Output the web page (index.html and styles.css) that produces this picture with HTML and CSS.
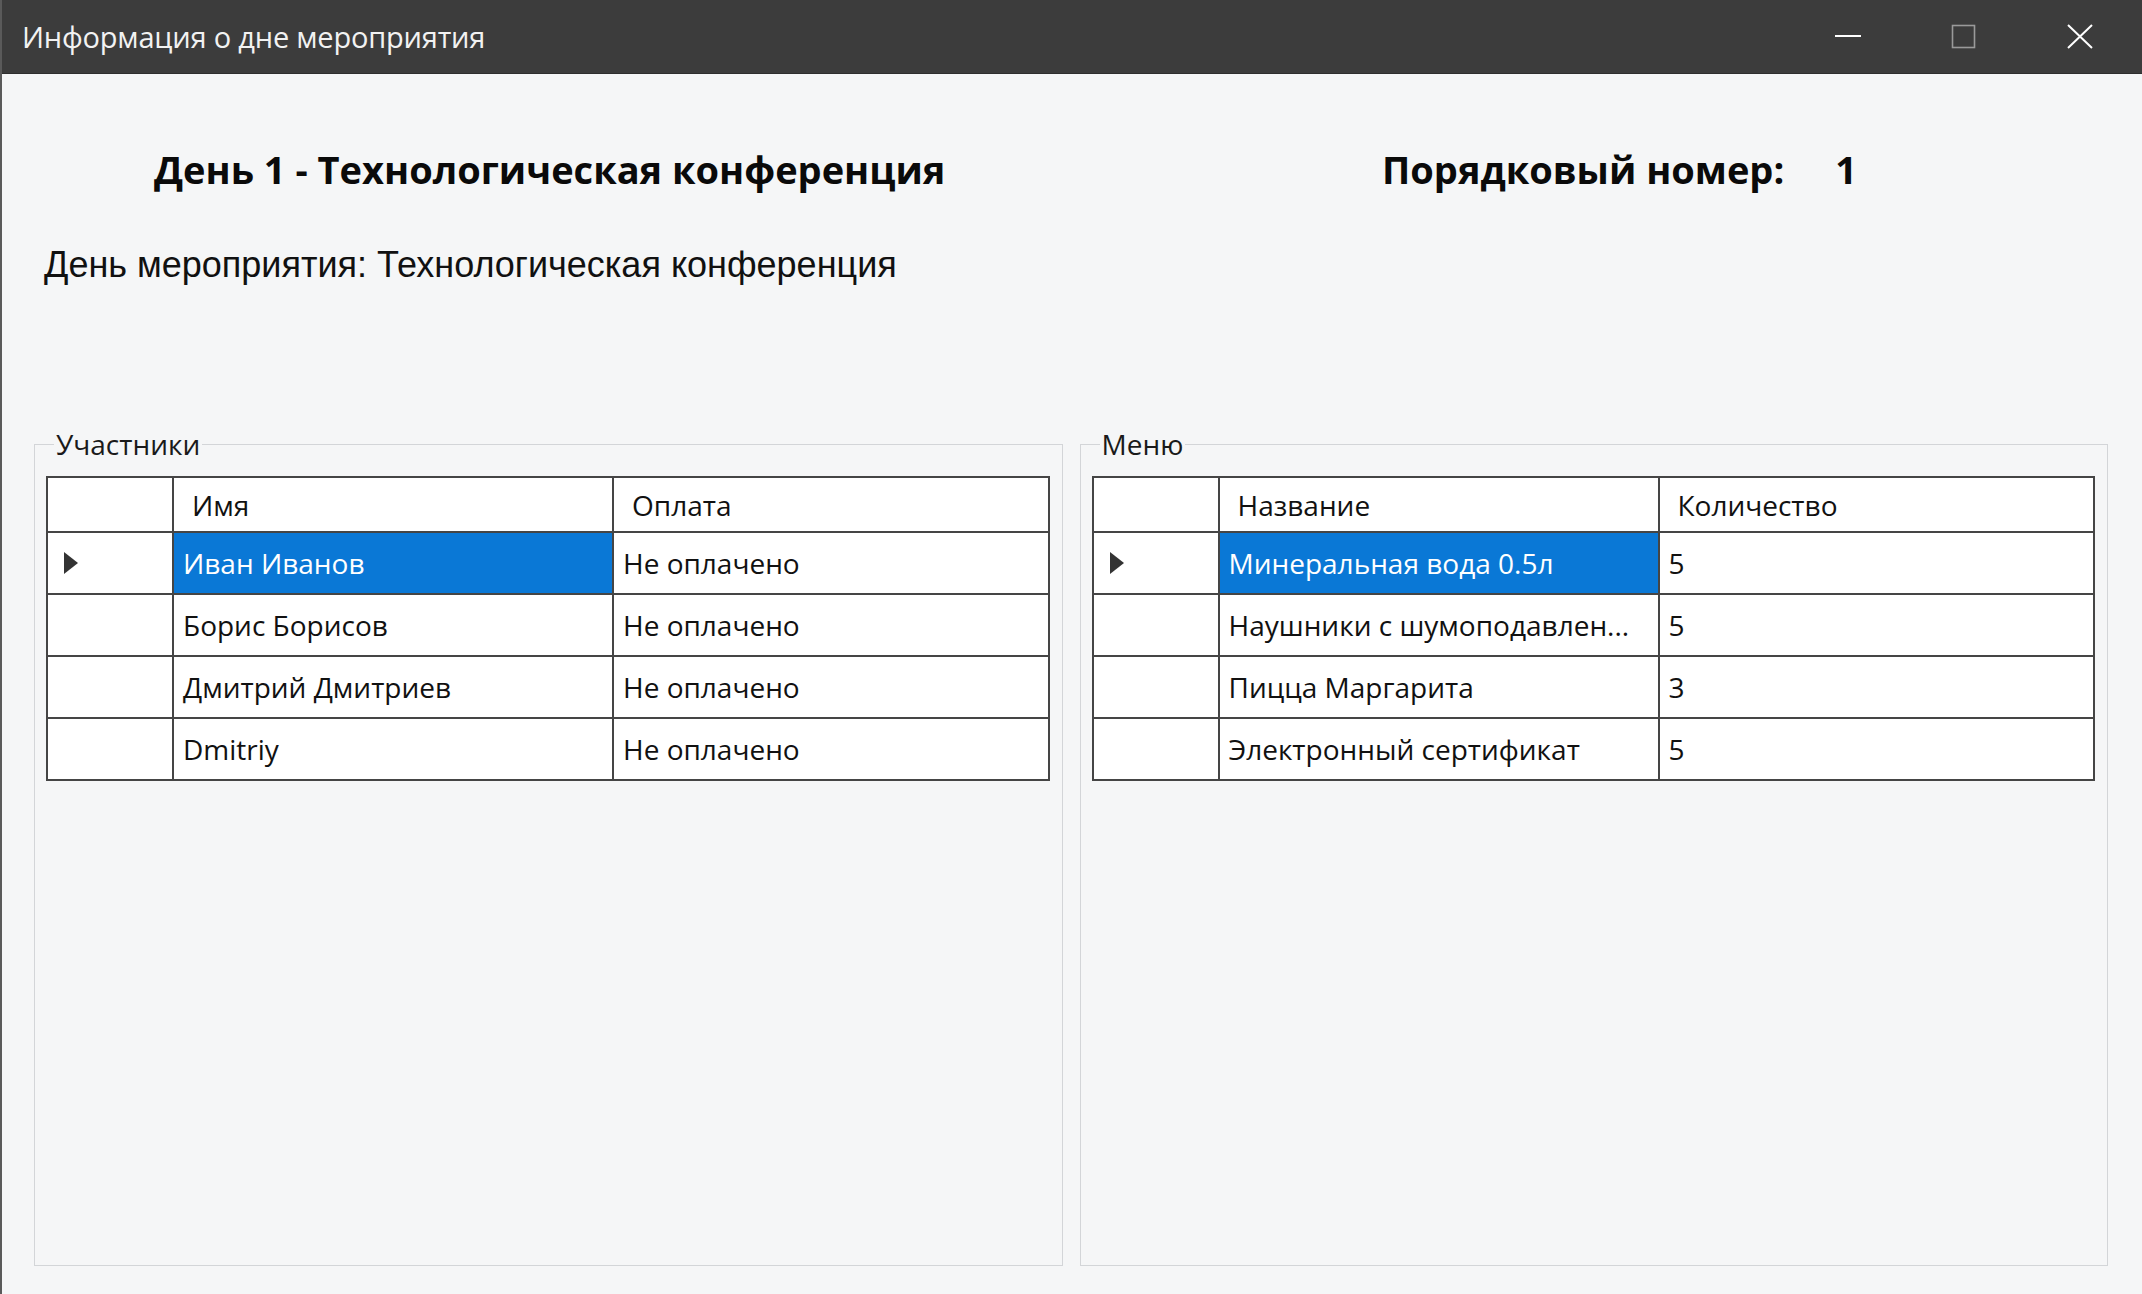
FILE: index.html
```html
<!DOCTYPE html>
<html lang="ru">
<head>
<meta charset="utf-8">
<title>Информация о дне мероприятия</title>
<link rel="stylesheet" href="styles.css">
</head>
<body>
<div class="window">
  <header class="titlebar">
    <span class="title">Информация о дне мероприятия</span>
    <div class="controls">
      <button class="ctl" aria-label="Свернуть">
        <svg width="26" height="26" viewBox="0 0 26 26"><line x1="0" y1="12" x2="26" y2="12" stroke="#ffffff" stroke-width="2"/></svg>
      </button>
      <button class="ctl" aria-label="Развернуть">
        <svg width="26" height="26" viewBox="0 0 26 26"><rect x="1.5" y="1.5" width="22" height="22" fill="none" stroke="#9a9a9a" stroke-width="1.6"/></svg>
      </button>
      <button class="ctl" aria-label="Закрыть">
        <svg width="26" height="26" viewBox="0 0 26 26"><path d="M1 1 L25 24 M25 1 L1 24" stroke="#ffffff" stroke-width="2" fill="none"/></svg>
      </button>
    </div>
  </header>

  <main class="content">
    <div class="head-row">
      <h1 class="day-title">День 1 - Технологическая конференция</h1>
      <span class="num-label">Порядковый номер:</span>
      <span class="num-value">1</span>
    </div>
    <p class="day-label">День мероприятия: Технологическая конференция</p>

    <div class="groups">
      <fieldset class="group">
        <legend>Участники</legend>
        <table class="grid">
          <colgroup><col class="c-rh"><col class="c-1"><col></colgroup>
          <thead>
            <tr><th class="rh"></th><th>Имя</th><th>Оплата</th></tr>
          </thead>
          <tbody>
            <tr><td class="rh"><span class="cur"></span></td><td class="sel">Иван Иванов</td><td>Не оплачено</td></tr>
            <tr><td class="rh"></td><td>Борис Борисов</td><td>Не оплачено</td></tr>
            <tr><td class="rh"></td><td>Дмитрий Дмитриев</td><td>Не оплачено</td></tr>
            <tr><td class="rh"></td><td>Dmitriy</td><td>Не оплачено</td></tr>
          </tbody>
        </table>
      </fieldset>

      <fieldset class="group">
        <legend>Меню</legend>
        <table class="grid">
          <colgroup><col class="c-rh"><col class="c-1"><col></colgroup>
          <thead>
            <tr><th class="rh"></th><th>Название</th><th>Количество</th></tr>
          </thead>
          <tbody>
            <tr><td class="rh"><span class="cur"></span></td><td class="sel">Минеральная вода 0.5л</td><td>5</td></tr>
            <tr><td class="rh"></td><td>Наушники с шумоподавлен...</td><td>5</td></tr>
            <tr><td class="rh"></td><td>Пицца Маргарита</td><td>3</td></tr>
            <tr><td class="rh"></td><td>Электронный сертификат</td><td>5</td></tr>
          </tbody>
        </table>
      </fieldset>
    </div>
  </main>
</div>
</body>
</html>
```

FILE: styles.css
```css
* { box-sizing: border-box; }

html, body {
  margin: 0;
  padding: 0;
  background: #f5f6f7;
}

.window {
  width: 2142px;
  height: 1294px;
  display: flex;
  flex-direction: column;
  background: #f5f6f7;
  border-left: 2px solid #5a5a5a;
  overflow: hidden;
}

.titlebar {
  height: 74px;
  flex: none;
  display: flex;
  align-items: center;
  background: #3c3c3c;
  border-bottom: 1px solid #2e2e2e;
  margin-left: -2px;
}

.title {
  padding-left: 22px;
  color: #f2f2f2;
  font-family: "Open Sans", "Noto Sans", sans-serif;
  font-size: 29px;
  letter-spacing: -0.2px;
}

.controls {
  margin-left: auto;
  margin-right: 4px;
  display: flex;
  height: 100%;
}

.ctl {
  width: 116px;
  height: 100%;
  border: 0;
  padding: 0;
  background: transparent;
  display: flex;
  align-items: center;
  justify-content: center;
}

.ctl svg { display: block; }

.content {
  flex: 1;
  padding: 0 34px 0 32px;
  display: flex;
  flex-direction: column;
}

.head-row {
  margin-top: 75px;
  display: grid;
  grid-template-columns: 1348px auto auto;
  justify-content: start;
  align-items: center;
  height: 40px;
}

.day-title,
.num-label,
.num-value {
  margin: 0;
  font-family: "Open Sans", "Noto Sans", sans-serif;
  font-weight: 700;
  font-size: 38px;
  line-height: 40px;
  color: #0a0a0a;
}

.day-title { padding-left: 120px; }

.num-value { margin-left: 51px; }

.day-label {
  margin: 56px 0 0 10px;
  font-family: "Liberation Sans", Arial, sans-serif;
  font-size: 36px;
  line-height: 40px;
  color: #111;
}

.groups {
  margin-top: 144px;
  display: flex;
  gap: 17px;
  height: 837px;
}

.group {
  flex: 1 1 0;
  min-width: 0;
  margin: 0;
  height: 837px;
  padding: 17px 12px 0 11px;
  border: 1px solid #d3d5d8;
}

.group legend {
  margin-left: 8px;
  padding: 0 2px;
  font-family: "Open Sans", "Noto Sans", sans-serif;
  font-size: 28px;
  line-height: 30px;
  color: #1a1a1a;
}

.grid {
  width: 100%;
  border-collapse: collapse;
  table-layout: fixed;
  background: #ffffff;
  font-family: "Open Sans", "Noto Sans", sans-serif;
  font-size: 28px;
  color: #111;
}

.c-rh { width: 126px; }
.c-1 { width: 440px; }

.grid th,
.grid td {
  border: 2px solid #454545;
  white-space: nowrap;
  overflow: hidden;
  text-overflow: clip;
  text-align: left;
}

.grid th {
  height: 55px;
  padding: 0 0 0 18px;
  font-weight: 400;
}

.grid td {
  height: 62px;
  padding: 0 0 0 9px;
}

.grid .rh { padding: 0 0 0 16px; }

.grid td.sel {
  background: #0a78d6;
  color: #ffffff;
}

.cur {
  display: block;
  width: 0;
  height: 0;
  border-top: 11px solid transparent;
  border-bottom: 11px solid transparent;
  border-left: 14px solid #333333;
}
```
